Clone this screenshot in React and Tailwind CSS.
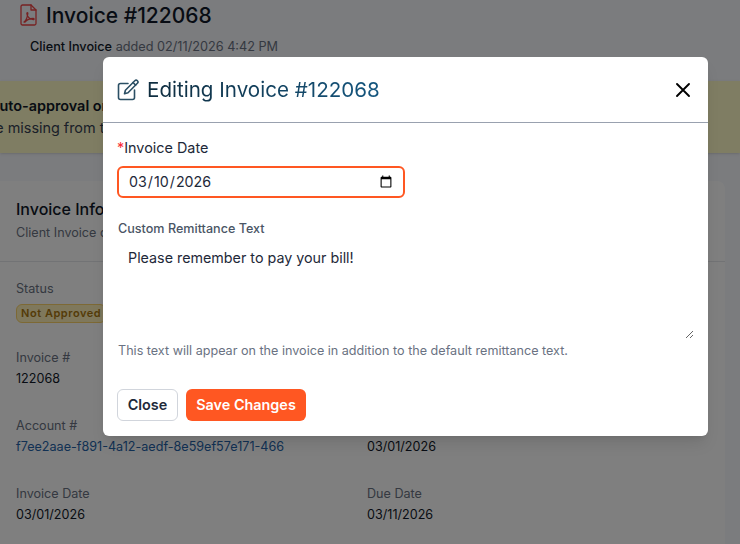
import React from "react";

function PdfIcon() {
  return (
    <svg width="17" height="22" viewBox="0 0 17 22" fill="none" stroke="#ef4444" strokeWidth="1.300" strokeLinejoin="round" strokeLinecap="round">
      <path d="M2.500 1H11l5 5v13.500a1.500 1.500 0 0 1-1.500 1.500h-12A1.500 1.500 0 0 1 1 19.500v-17A1.500 1.500 0 0 1 2.500 1z" />
      <path d="M11 1v5h5" />
      <path d="M4 18c2-1.500 3.500-5 3.800-8.500.1-1.300-.9-1.300-.9 0 0 3 3 6 6.300 6 1.200 0 1.200-1-.2-1-2.500 0-6 1.300-8 3.500z" />
    </svg>
  );
}

function EditIcon() {
  return (
    <svg width="22" height="22" viewBox="0 0 22 22" fill="none" stroke="#2b4f64" strokeWidth="1.600" strokeLinejoin="round" strokeLinecap="round">
      <path d="M11 4.500H3.500a2 2 0 0 0-2 2v12a2 2 0 0 0 2 2h12a2 2 0 0 0 2-2V11" />
      <path d="M17.800 1.700a1.800 1.800 0 0 1 2.600 2.600L11 13.800l-3.500.9.900-3.500z" />
      <path d="M16 3.500l2.600 2.600" />
    </svg>
  );
}

function Field({ label, children, className = "" }) {
  return (
    <div className={className}>
      <div className="text-[12.6px] leading-[20px] text-gray-500">{label}</div>
      <div className="mt-[1px] text-[12.6px] leading-[20px] text-gray-900">{children}</div>
    </div>
  );
}

export default function App() {
  return (
    <div className="relative h-[544px] w-[740px] overflow-hidden bg-[#f6f8fc] font-['Inter',sans-serif]">
      <div className="flex h-[81px] items-start pl-5 pt-1">
        <div className="flex-none">
          <PdfIcon />
        </div>
        <div className="ml-[9px]">
          <h1 className="text-[21px] leading-[24px] font-medium text-gray-900">Invoice #122068</h1>
          <p className="-ml-4 mt-[9px] text-[12.7px] leading-5 text-gray-500">
            <span className="font-medium text-gray-900">Client Invoice</span> added 02/11/2026 4:42 PM
          </p>
        </div>
      </div>

      <div className="flex h-[72px] flex-col justify-center bg-[#fefac6] text-[14.400px] leading-[22px] shadow-sm">
        <p className="-ml-[11px] font-semibold whitespace-nowrap text-gray-900">Auto-approval or</p>
        <p className="-ml-[18px] whitespace-nowrap text-gray-700">are missing from the</p>
      </div>

      <div className="mt-7 mr-[15px] h-[400px] rounded-r-lg bg-white">
        <div className="h-[81px] border-b border-gray-200 px-4 pt-[18px]">
          <h2 className="text-base leading-[20px] font-medium text-gray-900">Invoice Information</h2>
          <p className="mt-[4px] text-[12.6px] leading-5 text-gray-500">Client Invoice details</p>
        </div>
        <div className="grid grid-cols-[351px_1fr] px-4 pt-[17px]">
          <div className="col-span-2 h-[69px]">
            <div className="text-[12.6px] leading-5 text-gray-500">Status</div>
            <span className="mt-[1px] inline-block rounded-md border border-[#fbd36a] bg-[#fef1b8] px-1 text-[11px] leading-[17px] font-semibold tracking-wider whitespace-nowrap text-[#a9770f]">
              Not Approved
            </span>
          </div>
          <Field label="Invoice #" className="col-span-2 h-[68px]">122068</Field>
          <Field label="Account #" className="h-[68px]">
            <span className="text-[#2563a8]">f7ee2aae-f891-4a12-aedf-8e59ef57e171-466</span>
          </Field>
          <Field label="Created" className="h-[68px]">03/01/2026</Field>
          <Field label="Invoice Date">03/01/2026</Field>
          <Field label="Due Date">03/11/2026</Field>
        </div>
      </div>

      <div className="absolute inset-0 bg-black/50" />

      <div className="absolute top-[57px] left-[103px] h-[379px] w-[605px] rounded-md bg-white shadow-lg">
        <div className="flex h-[66px] items-center justify-between border-b border-gray-400 pr-[17px] pl-[14px]">
          <div className="flex items-center gap-[8px]">
            <EditIcon />
            <h2 className="bg-gradient-to-r from-[#0f2d3f] to-[#14567f] bg-clip-text text-[20.600px] leading-8 text-transparent">
              Editing Invoice #122068
            </h2>
          </div>
          <svg width="16" height="16" viewBox="0 0 16 16" stroke="#000" strokeWidth="1.900" strokeLinecap="round">
            <path d="M2 2l12 12M14 2L2 14" />
          </svg>
        </div>

        <div className="px-[14px] pt-[15px]">
          <label className="block text-[14.400px] leading-5 text-gray-800">
            <span className="text-red-500">*</span>Invoice Date
          </label>
          <input
            type="date"
            defaultValue="2026-03-10"
            className="mt-2 block h-[32px] w-[288px] rounded-md border-2 border-[#ff5722] bg-white pr-[8px] pl-[9px] text-[14.250px] text-gray-800 outline-none"
          />
          <label className="mt-[21px] block pl-[1px] text-[12.600px] leading-5 font-medium text-gray-600">
            Custom Remittance Text
          </label>
          <textarea
            defaultValue="Please remember to pay your bill!"
            className="mt-[1px] block h-[99px] w-[577px] px-[11px] py-[8px] text-[14.300px] leading-5 text-gray-800 outline-none"
          />
          <p className="mt-[2px] pl-[1px] text-[12.600px] leading-5 text-gray-500">
            This text will appear on the invoice in addition to the default remittance text.
          </p>
          <div className="mt-[28px] flex gap-2">
            <button className="h-[32px] w-[61px] rounded-md border border-gray-300 bg-white text-[14.400px] font-semibold text-gray-800">
              Close
            </button>
            <button className="h-[32px] w-[120px] rounded-md bg-[#ff5722] text-[14.400px] font-semibold text-white">
              Save Changes
            </button>
          </div>
        </div>
      </div>
    </div>
  );
}
